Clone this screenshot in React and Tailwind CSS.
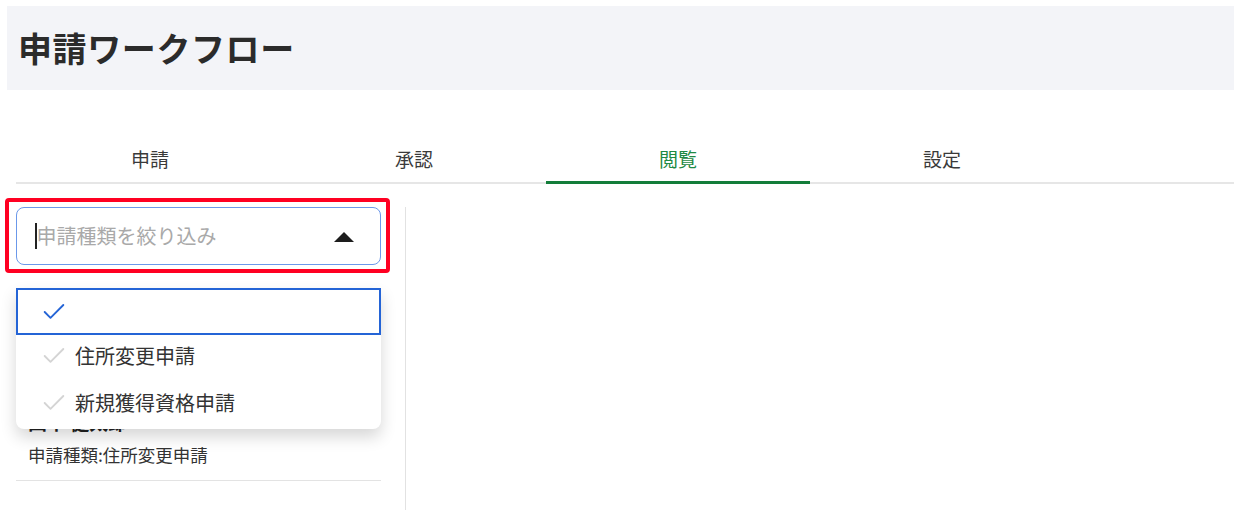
import { Check } from "lucide-react";

const tabs = ["申請", "承認", "閲覧", "設定"];
const options = ["", "住所変更申請", "新規獲得資格申請"];

export default function App() {
  return (
    <div className="h-[510px] w-[1236px] overflow-hidden bg-white font-['Noto_Sans_CJK_JP','Noto_Sans',sans-serif] text-[#333]">
      <header className="ml-[7px] mr-[2px] mt-[6px] flex h-[84px] items-center bg-[#f3f4f8] pl-[11px] pr-2">
        <h1 className="text-[34px] font-bold leading-none tracking-[0.6px] text-[#2b2b2b]">申請ワークフロー</h1>
      </header>

      <nav className="ml-[16px] mr-[2px] mt-[48px] flex border-b-2 border-[#e6e6e6] pl-[2px]">
        {tabs.map((tab) => {
          const active = tab === "閲覧";
          return (
            <div key={tab} className="relative flex h-[44px] w-[264px] items-start justify-center pt-[9px]">
              <span className={active ? "text-[19px] leading-6 text-[#1f8a44]" : "text-[19px] leading-6 text-[#3a3a3a]"}>{tab}</span>
              {active ? <span className="absolute -bottom-[2px] left-0 right-0 h-[3px] bg-[#137d3a]" /> : null}
            </div>
          );
        })}
      </nav>

      <div className="flex h-[326px]">
        <div className="relative ml-[16px] w-[365px]">
          <div className="relative mt-[23px]">
            <div className="flex h-[58px] items-center rounded-lg border border-[#6b98ea] pl-[18px] pr-[26px]">
              <span className="h-[26px] w-[1.5px] bg-[#222]" />
              <span className="flex-1 text-[20px] leading-none text-[#a9a9a9]">申請種類を絞り込み</span>
              <svg width="20" height="10" viewBox="0 0 20 10" className="mt-[1px]">
                <polygon points="10,0 20,10 0,10" fill="#1d1d1d" />
              </svg>
            </div>
            <div className="pointer-events-none absolute -bottom-[8px] -left-[11px] -right-[9px] -top-[9px] rounded-[4px] border-4 border-[#ff0022]" />
          </div>

          <div className="mt-[126px] border-b border-[#e3e3e3] px-3 pb-[15px] pt-[17px]">
            <p className="text-[19px] font-bold leading-7 text-[#222]">田中 健太郎</p>
            <p className="mt-[9px] text-[17.5px] leading-5 text-[#333]">申請種類:住所変更申請</p>
          </div>

          <ul className="absolute left-0 top-[104px] w-[365px] rounded-b-lg bg-white shadow-[0_8px_16px_rgba(0,0,0,0.16)]">
            {options.map((opt, i) => (
              <li
                key={i}
                className={
                  i === 0
                    ? "flex h-[47px] items-center border-2 border-[#2464d6] pl-[22px]"
                    : "flex h-[47px] items-center pb-[5px] pl-[24px]"
                }
              >
                <Check size={28} strokeWidth={1.6} className={i === 0 ? "text-[#2464d6]" : "text-[#d4d4d4]"} />
                <span className="ml-[7px] text-[20px] leading-none text-[#333]">{opt}</span>
              </li>
            ))}
          </ul>
        </div>
        <div className="ml-[24px] mt-[23px] w-px bg-[#e2e2e2]" />
      </div>
    </div>
  );
}
